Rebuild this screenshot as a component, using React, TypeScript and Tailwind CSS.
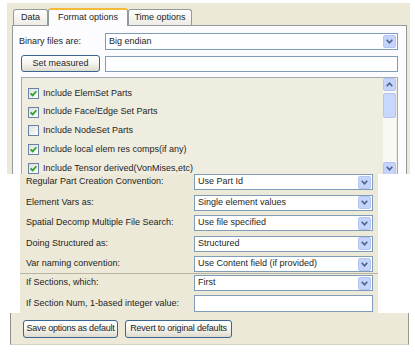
import React from 'react';
import { clsx } from 'clsx';

const font = { fontFamily: '"Liberation Sans", Arial, sans-serif' };

const Chevron: React.FC<{ up?: boolean }> = ({ up = false }) => (
  <svg width="7" height="5" viewBox="0 0 7 5">
    <path
      d={up ? 'M0.7 4.2 L3.5 1.2 L6.3 4.2' : 'M0.7 0.8 L3.5 3.8 L6.3 0.8'}
      fill="none"
      stroke="#4d6185"
      strokeWidth="1.6"
    />
  </svg>
);

const ArrowBox: React.FC<{ up?: boolean; className?: string }> = ({ up, className }) => (
  <div
    className={clsx(
      'w-[13px] h-[13px] shrink-0 rounded-[2px] bg-[#c4d4fc] border border-[#b4c6f0] flex items-center justify-center',
      className
    )}
  >
    <Chevron up={up} />
  </div>
);

const Select: React.FC<{ value: string; className?: string }> = ({ value, className }) => (
  <div className={clsx('bg-white border border-[#7f9db9] flex items-center pl-[3px] pr-px', className)}>
    <span className="flex-1 truncate">{value}</span>
    <ArrowBox />
  </div>
);

const Input: React.FC<{ className?: string }> = ({ className }) => (
  <div className={clsx('bg-white border border-[#7f9db9]', className)} />
);

const XpButton: React.FC<{ label: string; className?: string }> = ({ label, className }) => (
  <div
    className={clsx(
      'rounded-[3px] border border-[#3a6491] bg-gradient-to-b from-white via-[#f5f4ef] to-[#dedbcd] flex items-center justify-center whitespace-nowrap',
      className
    )}
  >
    {label}
  </div>
);

const Check: React.FC<{ checked: boolean }> = ({ checked }) => (
  <div className="w-[11px] h-[11px] shrink-0 border border-[#6b82a6] bg-gradient-to-br from-[#dedfd9] to-white flex items-center justify-center">
    {checked && (
      <svg width="7" height="7" viewBox="0 0 7 7">
        <path d="M0.6 3.4 L2.6 5.4 L6.4 1.2" stroke="#22a322" strokeWidth="1.7" fill="none" />
      </svg>
    )}
  </div>
);

const checks = [
  { label: 'Include ElemSet Parts', checked: true },
  { label: 'Include Face/Edge Set Parts', checked: true },
  { label: 'Include NodeSet Parts', checked: false },
  { label: 'Include local elem res comps(if any)', checked: true },
  { label: 'Include Tensor derived(VonMises,etc)', checked: true },
];

const upperRows = [
  { label: 'Regular Part Creation Convention:', value: 'Use Part Id' },
  { label: 'Element Vars as:', value: 'Single element values' },
  { label: 'Spatial Decomp Multiple File Search:', value: 'Use file specified' },
  { label: 'Doing Structured as:', value: 'Structured' },
  { label: 'Var naming convention:', value: 'Use Content field (if provided)' },
];

export default function App() {
  return (
    <div className="w-[415px] h-[356px] bg-white pt-[3px] text-[9px] text-[#1e1e1e] overflow-hidden" style={font}>
      {/* tabbed frame, cut off where the option rows lie over it */}
      <div className="ml-[7px] w-[403px] h-[171px] bg-[#ece9d8] pt-[5px] flex flex-col overflow-hidden">
        <div className="flex items-end h-[17px] pl-[6px]">
          <div className="w-[35px] h-[16px] border border-b-0 border-[#919b9c] rounded-t-[3px] bg-gradient-to-b from-white to-[#ecebe5] flex items-center justify-center">
            Data
          </div>
          <div className="relative z-10 -mb-px w-[80px] h-[18px] border-x border-[#919b9c] border-t-[2px] border-t-[#f7b93a] rounded-t-[3px] bg-[#fcfcfe] flex items-center justify-center">
            Format options
          </div>
          <div className="w-[64px] h-[16px] border border-b-0 border-[#919b9c] rounded-t-[3px] bg-gradient-to-b from-white to-[#ecebe5] flex items-center justify-center">
            Time options
          </div>
        </div>

        <div className="ml-[5px] w-[395px] flex-1 border border-b-0 border-[#919b9c] bg-[#fcfcfe] pt-[7px] flex flex-col gap-[5px]">
          <div className="flex items-center h-[17px]">
            <span className="pl-[6px] w-[92px]">Binary files are:</span>
            <Select value="Big endian" className="w-[293px] h-[17px]" />
          </div>
          <div className="flex items-center h-[17px] pl-[8px] gap-[5px]">
            <XpButton label="Set measured" className="w-[79px] h-[17px]" />
            <Input className="w-[293px] h-[16px]" />
          </div>
          <div className="mx-[8px] h-[110px] border border-[#a4a9b4] bg-[#efece0] flex">
            <div className="flex-1 pt-[6px] pl-[6px]">
              {checks.map(c => (
                <div key={c.label} className="h-[18.75px] flex items-center gap-[4px]">
                  <Check checked={c.checked} />
                  <span>{c.label}</span>
                </div>
              ))}
            </div>
            <div className="w-[13px] h-[97px] mr-px bg-[#f8f8f4] flex flex-col">
              <ArrowBox up />
              <div className="mt-[2px] h-[25px] rounded-[2px] bg-[#c8d7fc] border border-[#b4c6f0]" />
              <div className="flex-1" />
              <ArrowBox />
            </div>
          </div>
        </div>
      </div>

      {/* option rows */}
      <div className="ml-[20px] w-[358px] h-[139px] bg-[#ece9d8] flex flex-col">
        <div className="flex flex-col gap-[4.5px]">
          {upperRows.map(r => (
            <div key={r.label} className="grid grid-cols-[168px_179px] pl-[6px] items-center h-[16px]">
              <span>{r.label}</span>
              <Select value={r.value} className="h-[16px]" />
            </div>
          ))}
        </div>
        <div className="mt-px h-px bg-[#b8b4a2]" />
        <div className="grid grid-cols-[168px_179px] pl-[6px] items-center h-[16px] mt-px">
          <span>If Sections, which:</span>
          <Select value="First" className="h-[16px]" />
        </div>
        <div className="grid grid-cols-[168px_179px] pl-[6px] items-center h-[17px] mt-[4px]">
          <span>If Section Num, 1-based integer value:</span>
          <Input className="h-[17px]" />
        </div>
      </div>

      {/* default buttons */}
      <div className="ml-[10px] w-[399px] h-[32px] bg-[#ece9d8] border-x border-b border-l-[#8f8d84] border-r-[#9a988c] border-b-[#d6d3c6] pt-[7px] pl-[12px] flex gap-[7px]">
        <XpButton label="Save options as default" className="w-[95px] h-[18px] tracking-[-0.25px]" />
        <XpButton label="Revert to original defaults" className="w-[107px] h-[18px] tracking-[-0.2px]" />
      </div>
    </div>
  );
}
